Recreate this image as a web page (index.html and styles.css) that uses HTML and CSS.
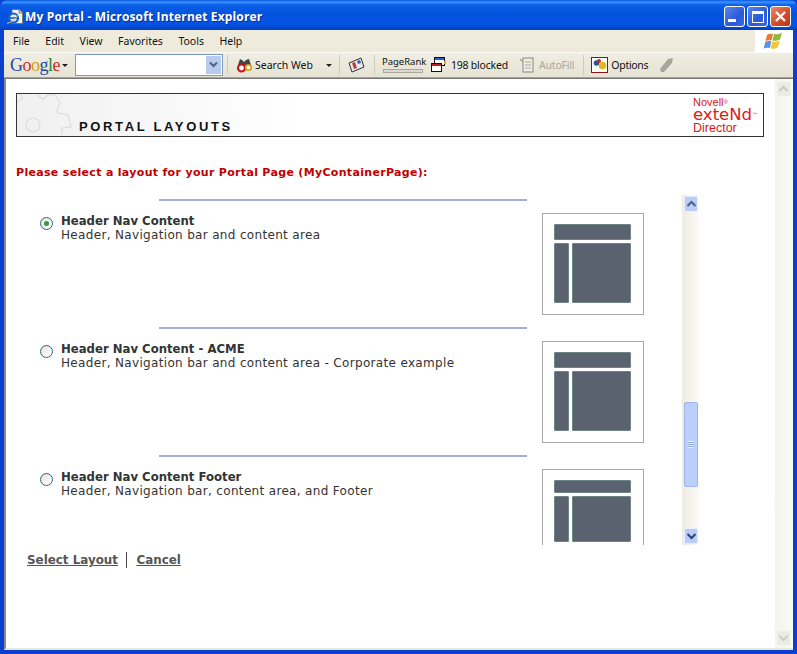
FILE: index.html
```html
<!DOCTYPE html>
<html lang="en">
<head>
<meta charset="utf-8">
<title>My Portal - Microsoft Internet Explorer</title>
<link rel="stylesheet" href="styles.css">
</head>
<body>
<div class="window">
  <header class="titlebar">
    <div class="title-left">
      <svg class="ie-icon" width="18" height="18" viewBox="0 0 18 18"><path d="M6 1.500h7l3.500 3.500v10.500H6z" fill="#f6f6ee" stroke="#77776e"/><path d="M13 1.500v3.500h3.500" fill="#d8d8cc" stroke="#77776e"/><circle cx="7.500" cy="10" r="4.500" fill="#dfeaf8" stroke="#1c5fc8" stroke-width="2.200"/><path d="M4 10h7.500" stroke="#1c5fc8" stroke-width="1.600"/><path d="M1 15c2 1 8-3 11-8" fill="none" stroke="#e8c850" stroke-width="1"/></svg>
      <span class="title-text">My Portal - Microsoft Internet Explorer</span>
    </div>
    <div class="win-buttons">
      <button class="wb wb-blue"><span class="min-bar"></span></button>
      <button class="wb wb-blue"><span class="max-box"></span></button>
      <button class="wb wb-red"><svg width="13" height="13" viewBox="0 0 13 13"><path d="M2 2l9 9M11 2l-9 9" stroke="#fff" stroke-width="2.400"/></svg></button>
    </div>
  </header>
  <div class="frame">
    <nav class="menubar">
      <div class="menus"><span>File</span><span>Edit</span><span>View</span><span>Favorites</span><span>Tools</span><span>Help</span></div>
      <div class="flag"><svg width="22" height="20" viewBox="0 0 22 20"><path d="M4 4c2-1.500 4-1.500 6-1l-1.500 6.500c-2-.5-4-.5-6 .5z" fill="#ea7a3a"/><path d="M11 3c2 .5 5 .5 8-1.500l-2 7c-3 1.500-6 1.500-7.500 1z" fill="#8cbc3c"/><path d="M2.300 10.800c2-1 4-1 6-.5L7 17c-2-.5-4-.5-6.300.5z" fill="#5a94dc"/><path d="M9.300 10.500c2 .5 4.500.5 7.500-1l-2 7c-3 1.500-5 1.500-7 1z" fill="#f2c838"/></svg></div>
    </nav>
    <div class="toolbar">
      <span class="google"><span class="g-b">G</span><span class="g-r">o</span><span class="g-y">o</span><span class="g-b">g</span><span class="g-g">l</span><span class="g-r">e</span></span>
      <span class="caret"></span>
      <div class="searchbox"><span class="drop"><svg width="11" height="8" viewBox="0 0 11 8"><path d="M2 1.500l3.500 3.500 3.500-3.500" fill="none" stroke="#4d6185" stroke-width="2"/></svg></span></div>
      <span class="sep"></span>
      <svg class="tb-icon" width="18" height="18" viewBox="0 0 18 18"><path d="M2 9l2-6 2 1 2 2 2-2 3-1 2 6z" fill="#444"/><circle cx="5.500" cy="12" r="3.500" fill="#fff" stroke="#c01818" stroke-width="2.200"/><circle cx="12.500" cy="11.500" r="2.800" fill="#fff" stroke="#c8a010" stroke-width="1.600"/></svg>
      <span class="tb-text tb-search">Search Web</span>
      <span class="caret caret-search"></span>
      <span class="sep sep-b"></span>
      <svg class="tb-news" width="18" height="18" viewBox="0 0 18 18"><path d="M2 7l12-5 3 9-12 5z" fill="#e8e8f0" stroke="#333"/><path d="M5 7l3-1 2 6-3 1z" fill="#c04030"/><path d="M10 5l3-1 1 3-3 1z" fill="#3a60b0"/></svg>
      <span class="sep sep-c"></span>
      <div class="pagerank"><span>PageRank</span><i></i></div>
      <svg class="tb-popup" width="16" height="16" viewBox="0 0 16 16"><rect x="3.500" y="0.500" width="10" height="8" fill="#fff" stroke="#111"/><rect x="4" y="1" width="9" height="2" fill="#2060d0"/><rect x="13" y="4" width="2" height="3" fill="#e8a030"/><rect x="0.500" y="6.500" width="10" height="8" fill="#fff" stroke="#111"/><rect x="1" y="7" width="9" height="2" fill="#c02020"/></svg>
      <span class="tb-text tb-blocked">198 blocked</span>
      <svg class="tb-fill" width="16" height="18" viewBox="0 0 16 18"><path d="M4 2h10v14H4zM1 3l3 3" fill="#eeeee6" stroke="#a8a89e" stroke-width="1.500"/><path d="M6 6h6M6 9h6M6 12h6" stroke="#a8a89e"/></svg>
      <span class="tb-text tb-off">AutoFill</span>
      <span class="sep sep-d"></span>
      <span class="options-ic"><svg width="14" height="14" viewBox="0 0 14 14"><circle cx="3.500" cy="5" r="2.800" fill="#2a50a0"/><circle cx="6" cy="3" r="2" fill="#c03020"/><circle cx="9.500" cy="7.500" r="3.800" fill="#e0b820"/></svg></span>
      <span class="tb-text tb-options">Options</span>
      <svg class="tb-pen" width="16" height="18" viewBox="0 0 16 18"><path d="M1 13l8-10 5-1-1 5-8 9H2z" fill="#a6a69e"/></svg>
    </div>
    <div class="viewport">
      <main class="page">
        <div class="banner">
          <svg class="gear" width="60" height="42" viewBox="0 0 60 42"><g fill="none" stroke="#dcdcdc" stroke-width="1.200"><path d="M0 8l6-4-3-4M20 1l6 4 5-4h7l5 8-3 7 1 3 10 2 3 12-9 1v7"/><circle cx="16" cy="31" r="7"/></g></svg>
          <h1>PORTAL LAYOUTS</h1>
          <div class="brand"><span class="b1">Novell<small>®</small></span><span class="b2">exteNd<small>™</small></span><span class="b3">Director</span></div>
        </div>
        <p class="prompt">Please select a layout for your Portal Page (MyContainerPage):</p>
        <div class="listwrap">
          <div class="list">
            <section class="item">
              <hr class="rule">
              <div class="row">
                <span class="radio on"><i></i></span>
                <div class="desc"><b>Header Nav Content</b><span>Header, Navigation bar and content area</span></div>
                <div class="thumb"><div class="t-h"></div><div class="t-b"><div class="t-n"></div><div class="t-c"></div></div></div>
              </div>
            </section>
            <section class="item">
              <hr class="rule">
              <div class="row">
                <span class="radio"></span>
                <div class="desc"><b>Header Nav Content - ACME</b><span>Header, Navigation bar and content area - Corporate example</span></div>
                <div class="thumb"><div class="t-h"></div><div class="t-b"><div class="t-n"></div><div class="t-c"></div></div></div>
              </div>
            </section>
            <section class="item">
              <hr class="rule">
              <div class="row">
                <span class="radio"></span>
                <div class="desc"><b>Header Nav Content Footer</b><span>Header, Navigation bar, content area, and Footer</span></div>
                <div class="thumb thumb-f"><div class="t-h"></div><div class="t-b"><div class="t-n"></div><div class="t-c"></div></div></div>
              </div>
            </section>
          </div>
          <div class="sb-inner">
            <span class="sb-btn"><svg width="11" height="8" viewBox="0 0 11 8"><path d="M1.500 6l4-4 4 4" fill="none" stroke="#4d6185" stroke-width="2"/></svg></span>
            <span class="sb-thumb"><i></i></span>
            <span class="sb-btn"><svg width="11" height="8" viewBox="0 0 11 8"><path d="M1.500 2l4 4 4-4" fill="none" stroke="#2f4468" stroke-width="2"/></svg></span>
          </div>
        </div>
        <div class="actions"><a href="#">Select Layout</a><span class="bar"></span><a href="#">Cancel</a></div>
      </main>
      <aside class="sb-outer">
        <span class="sb-off"><svg width="11" height="8" viewBox="0 0 11 8"><path d="M1.500 6l4-4 4 4" fill="none" stroke="#c4ccc0" stroke-width="2"/></svg></span>
        <span class="sb-off"><svg width="11" height="8" viewBox="0 0 11 8"><path d="M1.500 2l4 4 4-4" fill="none" stroke="#c4d4c0" stroke-width="2"/></svg></span>
      </aside>
    </div>
  </div>
</div>
</body>
</html>
```
FILE: styles.css
```css
* { box-sizing: border-box; }
html, body { margin: 0; height: 100%; }
body { width: 797px; height: 654px; overflow: hidden; background: #0a3fd0; font-family: "DejaVu Sans", sans-serif; }
.window { width: 797px; height: 654px; display: flex; flex-direction: column; }
.titlebar { height: 30px; flex: none; display: flex; align-items: center; justify-content: space-between; padding: 3px 6px 0 6px;
  background: linear-gradient(180deg, #0a55e0 0, #3a93ff 2px, #0a5fe8 5px, #0453dc 14px, #0454e4 24px, #0340c0 30px); border-radius: 7px 7px 0 0; }
.title-left { display: flex; align-items: center; gap: 2px; }
.ie-icon { flex: none; }
.title-text { color: #fff; font: bold 12px "Open Sans", "DejaVu Sans", sans-serif; letter-spacing: 0.150px; margin-left: -1px; text-shadow: 1px 1px 0 #0a2f90; }
.win-buttons { display: flex; gap: 2px; }
.wb { width: 21px; height: 21px; padding: 0; border: 1px solid #fff; border-radius: 3px; display: flex; align-items: center; justify-content: center; }
.wb-blue { background: linear-gradient(135deg, #5a86ee, #2a5ad8 60%, #3a68e0); }
.wb-red { background: linear-gradient(135deg, #e88a70, #d0482a 60%, #b83818); }
.min-bar { width: 8px; height: 3px; background: #fff; align-self: flex-end; margin: 0 6px 4px 0; }
.max-box { width: 12px; height: 12px; border: 1px solid #fff; border-top-width: 3px; }
.frame { flex: 1; display: flex; flex-direction: column; margin: 0 4px 4px; min-height: 0; background: #fff; }
.menubar { height: 23px; flex: none; display: flex; justify-content: space-between; background: #eeebdd; border-bottom: 1px solid #fbfaf5; }
.menus { display: flex; align-items: center; padding-left: 9px; font: 10.500px "Noto Sans", "DejaVu Sans", sans-serif; color: #111; gap: 15.500px; }
.flag { width: 38px; background: #fff; display: flex; align-items: center; justify-content: center; }
.toolbar { height: 25px; flex: none; display: flex; align-items: center; background: linear-gradient(180deg, #f0eee2, #e6e3d5); border-bottom: 1px solid #a6a396; font: 10.500px "Noto Sans", "DejaVu Sans", sans-serif; color: #111; padding-left: 6px; }
.google { font: 18px "Liberation Serif", serif; letter-spacing: -0.500px; width: 49px; flex: none; }
.g-b { color: #2448a8; } .g-r { color: #c8301c; } .g-y { color: #d09a10; } .g-g { color: #2c8a38; }
.caret { width: 0; height: 0; border: 3px solid transparent; border-top: 3px solid #222; border-bottom: 0; margin-left: 3px; flex: none; }
.searchbox { width: 148px; height: 22px; margin-left: 7px; background: #fff; border: 1px solid #7f9db9; padding: 1px; display: flex; justify-content: flex-end; flex: none; }
.drop { width: 15px; background: #b8cbef; display: flex; align-items: center; justify-content: center; }
.sep { width: 1px; height: 20px; background: #cfccbd; margin-left: 4px; flex: none; }
.tb-icon { margin-left: 8px; flex: none; }
.tb-text { white-space: nowrap; }
.tb-search { margin-left: 1px; }
.tb-off { color: #a8a89e; margin-left: 4px; letter-spacing: -0.200px; }
.tb-blocked { margin-left: 4px; letter-spacing: -0.200px; }
.tb-options { margin-left: 3px; letter-spacing: -0.300px; }
.caret-search { margin-left: 13px; }
.sep-b { margin-left: 7px; }
.tb-news { margin-left: 7px; flex: none; }
.sep-c { margin-left: 9px; }
.pagerank { margin-left: 7px; display: flex; flex-direction: column; width: 49px; flex: none; font-size: 9.500px; line-height: 10px; }
.pagerank i { display: block; height: 4px; width: 40px; margin: 2px 0 0 1px; background: #dcdad0; border: 1px solid #a8a89e; }
.tb-popup { flex: none; }
.tb-fill { margin-left: 11px; flex: none; }
.sep-d { margin-left: 9px; }
.options-ic { margin-left: 7px; width: 17px; height: 16px; border: 1px solid #8b1515; display: flex; align-items: center; justify-content: center; background: #fff; flex: none; }
.tb-pen { margin-left: 11px; flex: none; }
.viewport { flex: 1; min-height: 0; display: flex; background: #fff; border-top: 1px solid #777; border-left: 2px solid #8a8a82; border-bottom: 2px solid #e8e8e0; }
.page { flex: 1; min-width: 0; padding: 14px 11px 0 10px; }
.banner { height: 44px; border: 1px solid #333; position: relative; background: linear-gradient(90deg, #f0f0f0, #fff 38%); display: flex; align-items: flex-end; padding: 0 0 2px 62px; }
.gear { position: absolute; left: 0; top: 0; }
.banner h1 { margin: 0; font: bold 13px/14px "Liberation Sans", sans-serif; letter-spacing: 2.650px; color: #111; position: relative; }
.brand { position: absolute; left: 676px; top: 3px; display: flex; flex-direction: column; color: #d62020; }
.brand small { font-size: 6px; vertical-align: top; }
.b1 { font: 11px/10px "Liberation Sans", sans-serif; }
.b2 { font: 16.500px/15px "DejaVu Sans", sans-serif; }
.b3 { font: 12.500px/12px "Liberation Sans", sans-serif; }
.prompt { margin: 28px 0 0; font: bold 11px "DejaVu Sans", sans-serif; letter-spacing: 0.320px; color: #c00000; white-space: nowrap; height: 16px; line-height: 16px; }
.listwrap { margin-top: 14px; height: 350px; display: flex; width: 683px; }
.list { width: 666px; height: 350px; overflow: hidden; padding-top: 4px; flex: none; }
.item { height: 128px; }
.rule { margin: 0 0 0 143px; width: 368px; height: 2px; background: #9fb3d0; border: 0; }
.row { display: flex; align-items: flex-start; padding: 0 0 0 24px; }
.radio { width: 13px; height: 13px; border-radius: 50%; border: 1px solid #2f5f94; background: linear-gradient(135deg, #e4e4dc, #fff); margin-top: 16px; display: flex; align-items: center; justify-content: center; flex: none; }
.radio i { width: 5px; height: 5px; border-radius: 50%; background: #2e9c3c; }
.desc { margin-left: 8px; margin-top: 13px; width: 481px; display: flex; flex-direction: column; font: 12px/14px "DejaVu Sans", sans-serif; letter-spacing: 0.330px; color: #333; }
.desc b { font-size: 11.700px; font-weight: bold; letter-spacing: 0; }
.thumb { margin-top: 12px; width: 102px; height: 102px; border: 1px solid #a8a8a4; padding: 10px 11px 0; flex: none; background: #fff; }
.t-h { height: 16px; width: 77px; background: #5a6270; border: 1px solid #6e8585; border-radius: 1px; }
.t-b { display: flex; gap: 3px; margin-top: 3px; }
.t-n { width: 15px; height: 60px; background: #5a6270; border: 1px solid #6e8585; border-radius: 1px; }
.t-c { width: 59px; height: 60px; background: #5a6270; border: 1px solid #6e8585; border-radius: 1px; }
.thumb-f .t-h { height: 13px; }
.thumb-f .t-n, .thumb-f .t-c { height: 46px; }
.sb-inner { width: 17px; height: 350px; display: flex; flex-direction: column; background: linear-gradient(90deg, #efebe2, #fbfaf5); padding: 1px 1px 0 2px; flex: none; }
.sb-btn { width: 14px; height: 16px; background: #b8cdf7; border: 1px solid #e8eefb; border-radius: 2px; display: flex; align-items: center; justify-content: center; flex: none; }
.sb-thumb { width: 14px; height: 85px; margin-top: 190px; margin-bottom: 41px; background: #bccffa; border: 1px solid #9cb5ea; border-radius: 2px; display: flex; align-items: center; justify-content: center; flex: none; }
.sb-thumb i { width: 6px; height: 7px; background: repeating-linear-gradient(180deg, #e8f0ff 0 1px, #8fa8dc 1px 2px); }
.actions { margin-top: 7px; padding-left: 11px; display: flex; align-items: center; font: bold 11.900px "DejaVu Sans", sans-serif; }
.actions a { color: #555; text-decoration: underline; }
.bar { width: 1px; height: 16px; background: #444; margin: 0 9px 0 8.500px; flex: none; }
.sb-outer { width: 18px; flex: none; background: linear-gradient(90deg, #f4f4ec, #fbfbf6); display: flex; flex-direction: column; justify-content: space-between; padding: 2px 1px; }
.sb-off { width: 15px; height: 16px; background: #ecece4; border: 1px solid #f6f6f0; border-radius: 2px; display: flex; align-items: center; justify-content: center; }
```
